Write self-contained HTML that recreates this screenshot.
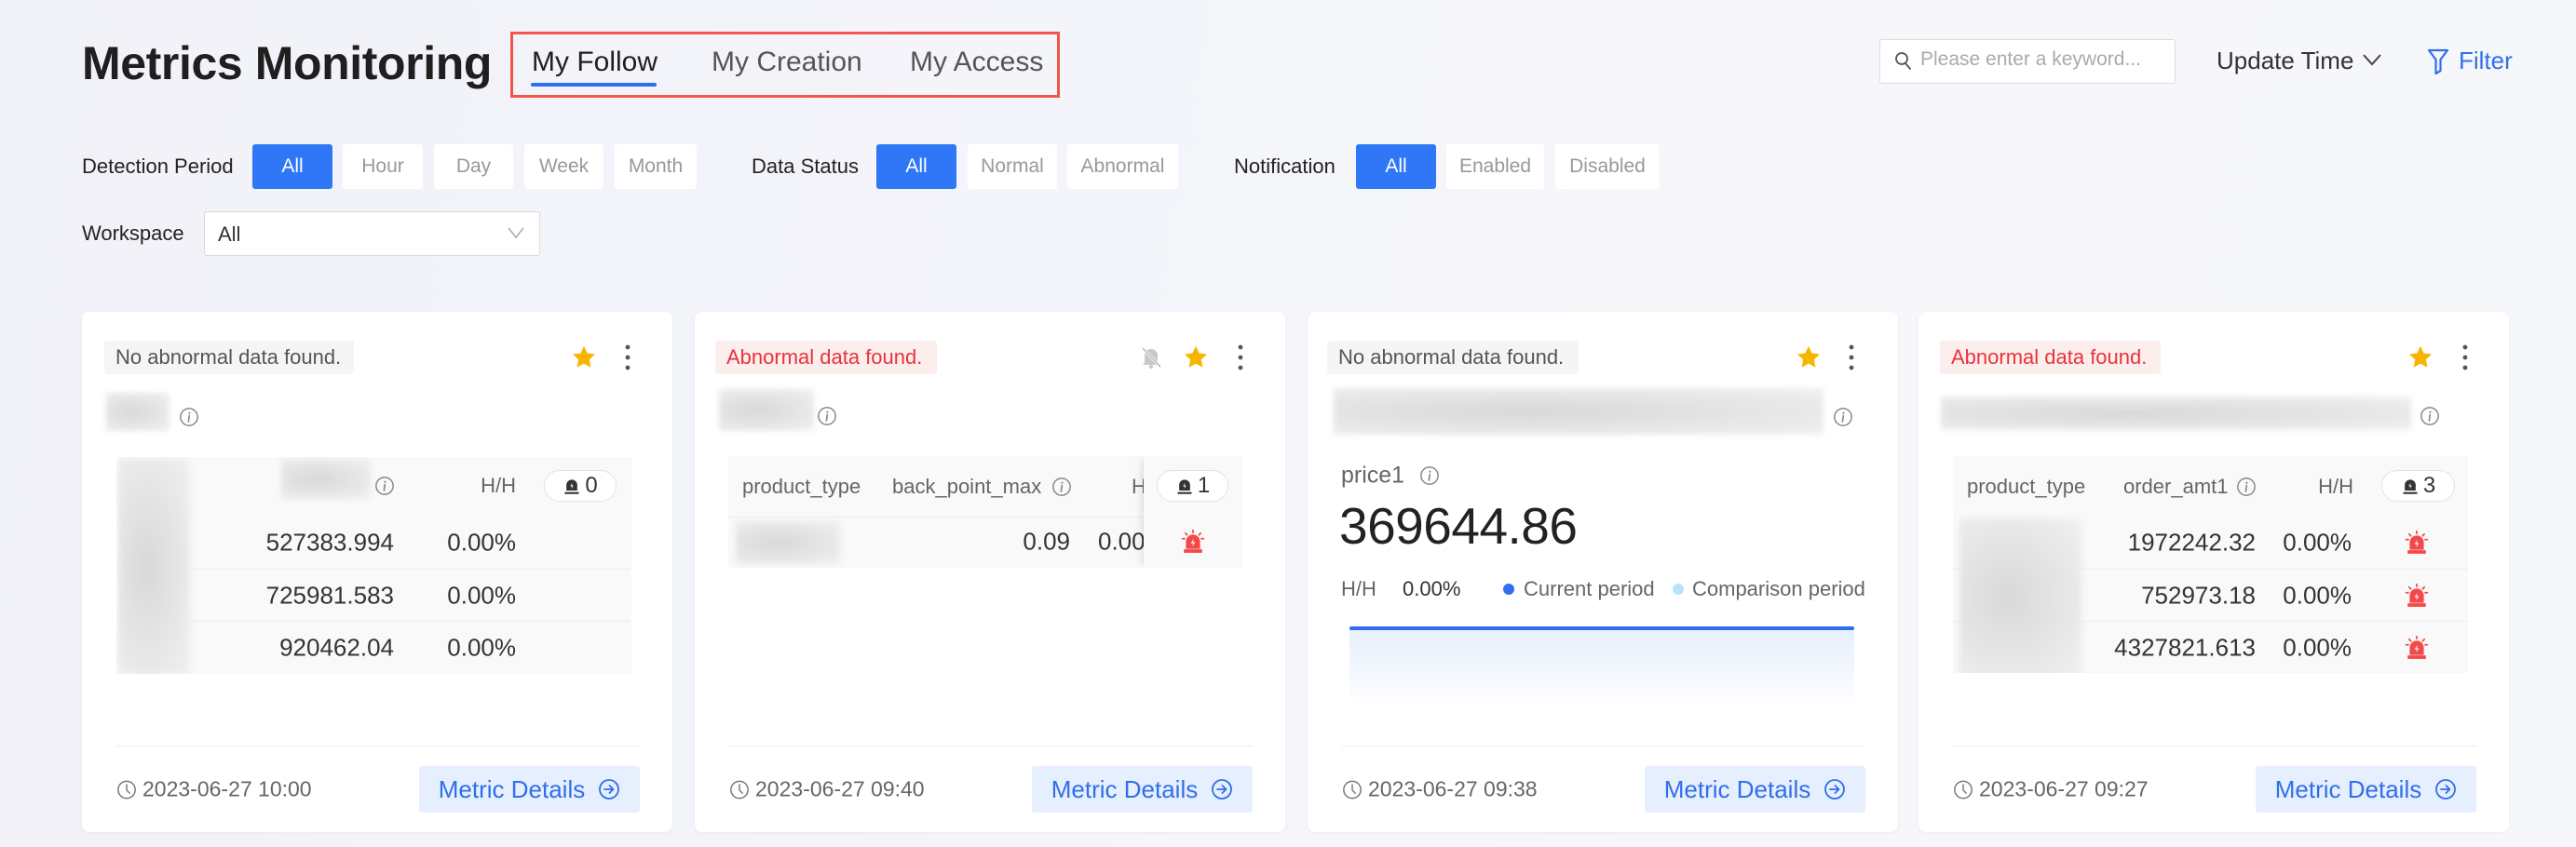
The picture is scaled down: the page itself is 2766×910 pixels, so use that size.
<!DOCTYPE html>
<html><head><meta charset="utf-8">
<style>
*{box-sizing:border-box;margin:0;padding:0}
body{width:2766px;height:910px;overflow:hidden;font-family:"Liberation Sans",sans-serif;background:linear-gradient(100deg,#f1f2f8 0%,#f4f5fa 40%,#f7f7fb 70%,#f6f7fa 100%);position:relative;color:#333}
.a{position:absolute}
.title{left:88px;top:40px;font-size:50px;font-weight:bold;color:#1f1f1f;letter-spacing:-0.4px;white-space:nowrap}
.tab{top:50px;font-size:30px;color:#555;white-space:nowrap}
.redbox{left:548px;top:34px;width:590px;height:71px;border:3px solid #f0574a}
.lbl{font-size:22px;color:#222;white-space:nowrap;transform:translateY(-50%)}
.btn{top:155px;height:48px;background:#fff;border-radius:3px;font-size:21px;color:#999;display:flex;align-items:center;justify-content:center}
.btn.on{background:#2f77f6;color:#fff}
.card{top:335px;width:634px;height:559px;background:#fff;border-radius:8px;box-shadow:0 1px 4px rgba(0,0,0,.05)}
.tag{top:31px;height:36px;border-radius:3px;font-size:22px;display:flex;align-items:center;padding-left:12px;white-space:nowrap}
.tag.ok{background:#f4f5f7;color:#555}
.tag.bad{background:#fdeeee;color:#e8333a}
.blur{background:radial-gradient(ellipse at 40% 50%,#d8d8d8 0%,#e6e6e6 55%,#f0f0f0 100%);filter:blur(3px)}
.tbl{background:#f9f9f9;overflow:hidden}
.th{font-size:22px;color:#666;white-space:nowrap;transform:translateY(-50%)}
.td{font-size:26px;color:#333;white-space:nowrap;transform:translateY(-50%)}
.line{height:1px;background:#ececec}
.badge{height:34px;border:1px solid #e3e3e3;border-radius:17px;background:#fff;display:flex;align-items:center;justify-content:center;font-size:24px;color:#333;gap:4px}
.foot{top:466px;left:37px;width:562px;height:1px;background:#ececec}
.date{left:37px;top:513px;transform:translateY(-50%);display:flex;align-items:center;gap:6px;font-size:23px;color:#666;white-space:nowrap}
.md{left:362px;top:488px;width:237px;height:50px;background:#e6effd;border-radius:3px;display:flex;align-items:center;justify-content:center;gap:14px;font-size:26px;color:#2f6fed;white-space:nowrap}
.ic{position:absolute;transform:translate(-50%,-50%)}
</style></head><body>

<svg width="0" height="0" style="position:absolute">
<defs>
<symbol id="star" viewBox="0 0 24 24"><path d="M12 1.5l3.1 6.6 7.2.9-5.3 5 1.4 7.2L12 17.7l-6.4 3.5 1.4-7.2-5.3-5 7.2-.9z" fill="#f7b500"/></symbol>
<symbol id="keb" viewBox="0 0 10 30"><circle cx="5" cy="4" r="2.4" fill="#555"/><circle cx="5" cy="15" r="2.4" fill="#555"/><circle cx="5" cy="26" r="2.4" fill="#555"/></symbol>
<symbol id="info" viewBox="0 0 24 24"><circle cx="12" cy="12" r="10" fill="none" stroke="#888" stroke-width="1.6"/><circle cx="12.5" cy="7.3" r="1.2" fill="#888"/><path d="M12.3 10.5l-1 7" stroke="#888" stroke-width="1.8" stroke-linecap="round"/></symbol>
<symbol id="siren" viewBox="0 0 24 24"><path d="M12 0.5v2.5M4.5 3.5l1.6 1.8M19.5 3.5l-1.6 1.8M1.5 9h2.2M20.3 9h2.2" stroke="#f5484a" stroke-width="1.6" stroke-linecap="round"/><path d="M5 19v-7a7 7 0 0 1 14 0v7z" fill="#f5484a"/><rect x="3" y="19.5" width="18" height="3.5" fill="#f5484a"/><path d="M12.8 9l-3 4.5h2.4l-1 3.5 3-4.5h-2.4z" fill="#fff"/></symbol>
<symbol id="bsiren" viewBox="0 0 24 24"><path d="M5 18v-7a7 7 0 0 1 14 0v7z" fill="#333"/><rect x="3" y="20" width="18" height="2.5" fill="#333"/><path d="M12.8 8l-3 4.5h2.4l-1 3.5 3-4.5h-2.4z" fill="#fff"/></symbol>
<symbol id="clock" viewBox="0 0 24 24"><circle cx="12" cy="12" r="10" fill="none" stroke="#777" stroke-width="1.6"/><path d="M12 6v6.5l3.5 3.5" fill="none" stroke="#777" stroke-width="1.6" stroke-linecap="round"/></symbol>
<symbol id="arr" viewBox="0 0 24 24"><circle cx="12" cy="12" r="10" fill="none" stroke="#2f6fed" stroke-width="1.8"/><path d="M7 12h9.5M12.5 8l4 4-4 4" fill="none" stroke="#2f6fed" stroke-width="1.8" stroke-linecap="round" stroke-linejoin="round"/></symbol>
</defs></svg>

<div class="a title" style="top:39px">Metrics Monitoring</div>
<div class="a redbox"></div>
<div class="a tab" style="left:571px;color:#1f1f1f;font-weight:500">My Follow</div>
<div class="a" style="left:570px;top:89px;width:135px;height:4px;background:#2f6fed;border-radius:2px"></div>
<div class="a tab" style="left:764px">My Creation</div>
<div class="a tab" style="left:977px">My Access</div>

<div class="a" style="left:2018px;top:42px;width:318px;height:48px;background:#fff;border:1px solid #dcdcdc;border-radius:3px"></div>
<svg class="a" style="left:2034px;top:55px" width="20" height="22" viewBox="0 0 20 22"><circle cx="8" cy="8" r="6" fill="none" stroke="#555" stroke-width="1.8"/><path d="M12 13l5 6" stroke="#555" stroke-width="1.8" stroke-linecap="round"/></svg>
<div class="a" style="left:2062px;top:52px;font-size:21px;color:#aaa;white-space:nowrap">Please enter a keyword...</div>
<div class="a" style="left:2380px;top:50px;font-size:26px;color:#333;white-space:nowrap">Update Time</div>
<svg class="a" style="left:2536px;top:56px" width="22" height="16" viewBox="0 0 22 16"><path d="M2 3l9 10 9-10" fill="none" stroke="#444" stroke-width="2"/></svg>
<svg class="a" style="left:2606px;top:52px" width="24" height="28" viewBox="0 0 24 28"><path d="M2 2h20l-7.5 10v12l-5 3V12z" fill="none" stroke="#2f6fed" stroke-width="2.2" stroke-linejoin="round"/></svg>
<div class="a" style="left:2640px;top:50px;font-size:26px;color:#2f6fed">Filter</div>

<div class="a lbl" style="left:88px;top:179px">Detection Period</div>
<div class="a btn on" style="left:271px;width:86px">All</div>
<div class="a btn" style="left:368px;width:86px">Hour</div>
<div class="a btn" style="left:466px;width:85px">Day</div>
<div class="a btn" style="left:563px;width:85px">Week</div>
<div class="a btn" style="left:660px;width:88px">Month</div>
<div class="a lbl" style="left:807px;top:179px">Data Status</div>
<div class="a btn on" style="left:941px;width:86px">All</div>
<div class="a btn" style="left:1039px;width:96px">Normal</div>
<div class="a btn" style="left:1146px;width:119px">Abnormal</div>
<div class="a lbl" style="left:1325px;top:179px">Notification</div>
<div class="a btn on" style="left:1456px;width:86px">All</div>
<div class="a btn" style="left:1553px;width:105px">Enabled</div>
<div class="a btn" style="left:1670px;width:112px">Disabled</div>

<div class="a lbl" style="left:88px;top:251px">Workspace</div>
<div class="a" style="left:219px;top:227px;width:361px;height:48px;background:#fff;border:1px solid #d9d9d9;border-radius:3px"></div>
<div class="a" style="left:234px;top:239px;font-size:22px;color:#333">All</div>
<svg class="a" style="left:545px;top:243px" width="18" height="14" viewBox="0 0 18 14"><path d="M1 2l8 10 8-10" fill="none" stroke="#aaa" stroke-width="1.5"/></svg>

<!-- Card 1 -->
<div class="a card" style="left:88px">
  <div class="a tag ok" style="left:24px;width:268px">No abnormal data found.</div>
  <svg class="ic" style="left:539px;top:49px" width="28" height="28"><use href="#star"/></svg>
  <svg class="ic" style="left:586px;top:49px" width="10" height="30"><use href="#keb"/></svg>
  <div class="a blur" style="left:26px;top:87px;width:68px;height:41px"></div>
  <svg class="ic" style="left:115px;top:113px" width="22" height="22"><use href="#info"/></svg>
  <div class="a tbl" style="left:37px;top:156px;width:553px;height:233px">
    <div class="a line" style="left:0;top:120px;width:553px"></div>
    <div class="a line" style="left:0;top:176px;width:553px"></div>
    <div class="a blur" style="left:2px;top:2px;width:77px;height:232px"></div>
    <div class="a blur" style="left:177px;top:2px;width:96px;height:43px"></div>
    <svg class="ic" style="left:288px;top:31px" width="22" height="22"><use href="#info"/></svg>
    <div class="a th" style="right:124px;top:31px">H/H</div>
    <div class="a badge" style="left:459px;top:14px;width:78px"><svg width="20" height="20"><use href="#bsiren"/></svg>0</div>
    <div class="a td" style="right:255px;top:92px">527383.994</div><div class="a td" style="right:124px;top:92px">0.00%</div>
    <div class="a td" style="right:255px;top:149px">725981.583</div><div class="a td" style="right:124px;top:149px">0.00%</div>
    <div class="a td" style="right:255px;top:205px">920462.04</div><div class="a td" style="right:124px;top:205px">0.00%</div>
  </div>
  <div class="a foot"></div>
  <div class="a date"><svg width="22" height="22"><use href="#clock"/></svg>2023-06-27 10:00</div>
  <div class="a md">Metric Details<svg width="24" height="24"><use href="#arr"/></svg></div>
</div>

<!-- Card 2 -->
<div class="a card" style="left:746px">
  <div class="a tag bad" style="left:22px;width:238px">Abnormal data found.</div>
  <svg class="ic" style="left:490px;top:49px" width="24" height="26" viewBox="0 0 24 26"><path d="M5 19V11a7 7 0 0 1 14 0v8l2 2H3z" fill="#c8c8c8"/><circle cx="12" cy="23" r="2" fill="#c8c8c8"/><path d="M3 3l19 20" stroke="#fff" stroke-width="3"/><path d="M3 3l19 20" stroke="#b5b5b5" stroke-width="1.4"/></svg>
  <svg class="ic" style="left:538px;top:49px" width="28" height="28"><use href="#star"/></svg>
  <svg class="ic" style="left:586px;top:49px" width="10" height="30"><use href="#keb"/></svg>
  <div class="a blur" style="left:26px;top:83px;width:102px;height:45px"></div>
  <svg class="ic" style="left:142px;top:112px" width="22" height="22"><use href="#info"/></svg>
  <div class="a tbl" style="left:36px;top:155px;width:552px;height:120px">
    <div class="a th" style="left:15px;top:33px">product_type</div>
    <div class="a th" style="left:176px;top:33px">back_point_max</div>
    <svg class="ic" style="left:358px;top:33px" width="22" height="22"><use href="#info"/></svg>
    <div class="a th" style="left:433px;top:33px">H/H</div>
    <div class="a line" style="left:0;top:65px;width:446px"></div>
    <div class="a blur" style="left:8px;top:70px;width:112px;height:46px"></div>
    <div class="a td" style="right:185px;top:92px">0.09</div>
    <div class="a td" style="left:397px;top:92px">0.00%</div>
    <div class="a" style="left:446px;top:0;width:106px;height:120px;background:#f9f9f9;box-shadow:-6px 0 8px -4px rgba(0,0,0,.12)"></div>
    <div class="a badge" style="left:460px;top:15px;width:77px"><svg width="20" height="20"><use href="#bsiren"/></svg>1</div>
    <svg class="ic" style="left:499px;top:92px" width="26" height="26"><use href="#siren"/></svg>
  </div>
  <div class="a foot"></div>
  <div class="a date"><svg width="22" height="22"><use href="#clock"/></svg>2023-06-27 09:40</div>
  <div class="a md">Metric Details<svg width="24" height="24"><use href="#arr"/></svg></div>
</div>

<!-- Card 3 -->
<div class="a card" style="left:1404px">
  <div class="a tag ok" style="left:21px;width:270px">No abnormal data found.</div>
  <svg class="ic" style="left:538px;top:49px" width="28" height="28"><use href="#star"/></svg>
  <svg class="ic" style="left:584px;top:49px" width="10" height="30"><use href="#keb"/></svg>
  <div class="a blur" style="left:28px;top:82px;width:526px;height:50px"></div>
  <svg class="ic" style="left:575px;top:113px" width="22" height="22"><use href="#info"/></svg>
  <div class="a" style="left:36px;top:176px;transform:translateY(-50%);font-size:25px;color:#666">price1</div>
  <svg class="ic" style="left:131px;top:176px" width="22" height="22"><use href="#info"/></svg>
  <div class="a" style="left:34px;top:198px;font-size:55px;color:#222;letter-spacing:-0.5px">369644.86</div>
  <div class="a" style="left:36px;top:298px;transform:translateY(-50%);font-size:22px;color:#666">H/H</div>
  <div class="a" style="left:102px;top:298px;transform:translateY(-50%);font-size:22px;color:#333">0.00%</div>
  <div class="a" style="left:210px;top:292px;width:12px;height:12px;border-radius:50%;background:#2f6fed"></div>
  <div class="a" style="left:232px;top:298px;transform:translateY(-50%);font-size:22px;color:#666;white-space:nowrap">Current period</div>
  <div class="a" style="left:392px;top:292px;width:12px;height:12px;border-radius:50%;background:#b7e3fa"></div>
  <div class="a" style="left:413px;top:298px;transform:translateY(-50%);font-size:22px;color:#666;white-space:nowrap">Comparison period</div>
  <div class="a" style="left:45px;top:338px;width:542px;height:82px;background:linear-gradient(#e6effd,#fafcff 90%,#fff)"></div>
  <div class="a" style="left:45px;top:338px;width:542px;height:4px;background:#2f6fed;border-radius:2px"></div>
  <div class="a foot"></div>
  <div class="a date"><svg width="22" height="22"><use href="#clock"/></svg>2023-06-27 09:38</div>
  <div class="a md">Metric Details<svg width="24" height="24"><use href="#arr"/></svg></div>
</div>

<!-- Card 4 -->
<div class="a card" style="left:2060px">
  <div class="a tag bad" style="left:23px;width:237px">Abnormal data found.</div>
  <svg class="ic" style="left:539px;top:49px" width="28" height="28"><use href="#star"/></svg>
  <svg class="ic" style="left:587px;top:49px" width="10" height="30"><use href="#keb"/></svg>
  <div class="a blur" style="left:24px;top:91px;width:505px;height:36px"></div>
  <svg class="ic" style="left:549px;top:112px" width="22" height="22"><use href="#info"/></svg>
  <div class="a tbl" style="left:37px;top:155px;width:553px;height:233px">
    <div class="a line" style="left:0;top:121px;width:553px"></div>
    <div class="a line" style="left:0;top:177px;width:553px"></div>
    <div class="a th" style="left:15px;top:33px">product_type</div>
    <div class="a th" style="left:183px;top:33px">order_amt1</div>
    <svg class="ic" style="left:315px;top:33px" width="22" height="22"><use href="#info"/></svg>
    <div class="a th" style="right:123px;top:33px">H/H</div>
    <div class="a badge" style="left:460px;top:15px;width:79px"><svg width="20" height="20"><use href="#bsiren"/></svg>3</div>
    <div class="a blur" style="left:7px;top:67px;width:131px;height:170px"></div>
    <div class="a td" style="right:228px;top:93px">1972242.32</div><div class="a td" style="right:125px;top:93px">0.00%</div>
    <div class="a td" style="right:228px;top:150px">752973.18</div><div class="a td" style="right:125px;top:150px">0.00%</div>
    <div class="a td" style="right:228px;top:206px">4327821.613</div><div class="a td" style="right:125px;top:206px">0.00%</div>
    <svg class="ic" style="left:498px;top:93px" width="26" height="26"><use href="#siren"/></svg>
    <svg class="ic" style="left:498px;top:150px" width="26" height="26"><use href="#siren"/></svg>
    <svg class="ic" style="left:498px;top:206px" width="26" height="26"><use href="#siren"/></svg>
  </div>
  <div class="a foot"></div>
  <div class="a date"><svg width="22" height="22"><use href="#clock"/></svg>2023-06-27 09:27</div>
  <div class="a md">Metric Details<svg width="24" height="24"><use href="#arr"/></svg></div>
</div>

</body></html>
